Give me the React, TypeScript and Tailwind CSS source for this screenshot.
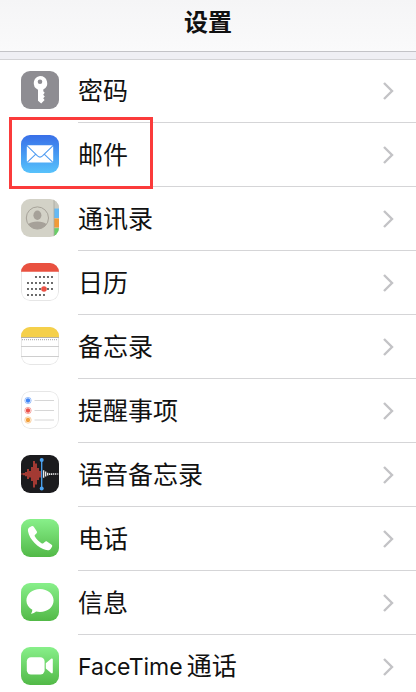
import React from 'react';

interface SettingsItem {
  id: string;
  label: React.ReactNode;
  icon: React.ReactNode;
  highlighted?: boolean;
}

interface IconTileProps {
  className: string;
  children: React.ReactNode;
}

const IconTile: React.FC<IconTileProps> = ({ className, children }) => (
  <span className={`block size-[38px] shrink-0 overflow-hidden rounded-[9px] ${className}`}>
    <svg className="block size-full" viewBox="0 0 38 38" fill="none" aria-hidden="true">
      {children}
    </svg>
  </span>
);

// Thin outline for the white icons
const TileOutline = () => (
  <rect x=".5" y=".5" width="37" height="37" rx="8.5" stroke="#e6e6e6" />
);

const KeyIcon = () => (
  <IconTile className="bg-[#8e8d92]">
    <path
      fill="#fff"
      fillRule="evenodd"
      d="M19 5a7.2 7.2 0 0 1 3.3 13.6v1.6l1.4 1.5-1.5 2 1.6 1.8-1.6 1.8 1.4 1.6-3.4 3.7-3.2-2.8V18.7A7.2 7.2 0 0 1 19 5Zm0 3.4a2.3 2.3 0 1 0 0 4.6 2.3 2.3 0 0 0 0-4.6Z"
    />
  </IconTile>
);

const MailIcon = () => (
  <IconTile className="bg-gradient-to-b from-[#3a6fe8] to-[#58c2fb]">
    <rect x="5.8" y="10.2" width="26.4" height="17.4" rx="1.6" fill="#fff" />
    <path
      stroke="#4f9cf1"
      strokeWidth="1.1"
      d="m6.2 10.8 10.3 10.1q2.5 2.3 5 0l10.3-10.1M6.4 27.2l8.4-8M31.6 27.2l-8.4-8"
    />
  </IconTile>
);

const ContactsIcon = () => (
  <IconTile className="bg-[#d3d2c7]">
    <rect x="33" width="5" height="9.5" fill="#c9c9c0" />
    <rect x="33" y="9.5" width="5" height="9.5" fill="#66b9f3" />
    <rect x="33" y="19.5" width="5" height="9" fill="#f19a38" />
    <rect x="33" y="29.2" width="5" height="8.8" fill="#69ce68" />
    <path stroke="#a9a89f" strokeWidth=".8" d="M33 0v38" />
    <circle cx="16.4" cy="19" r="11.1" stroke="#a6a299" strokeWidth="1" />
    <ellipse cx="16.4" cy="16.2" rx="4" ry="4.7" fill="#a6a199" />
    <path fill="#a6a199" d="M7.3 25.2c1.9-1.8 5.2-2.8 9.1-2.8s7.2 1 9.1 2.8a11.1 11.1 0 0 1-18.2 0Z" />
  </IconTile>
);

// first and last column of each calendar line
const calendarLines = [
  { y: 14, from: 2, to: 6 },
  { y: 20, from: 0, to: 6 },
  { y: 26, from: 0, to: 6 },
  { y: 32, from: 0, to: 4 },
];
const calendarColumns = [7, 11, 15, 19, 23, 27, 31];

const CalendarIcon = () => (
  <IconTile className="bg-white">
    <TileOutline />
    <path fill="#e95140" d="M0 0h38v8.7H0z" />
    {calendarLines.map(({ y, from, to }) =>
      calendarColumns.slice(from, to + 1).map((x) => (
        <circle key={`${x}-${y}`} cx={x} cy={y} r=".9" fill="#262626" />
      ))
    )}
    <circle cx="23" cy="26" r="2.8" fill="#ec5245" />
  </IconTile>
);

const NotesIcon = () => (
  <IconTile className="bg-white">
    <TileOutline />
    <path fill="#f5d04a" d="M0 0h38v10H0z" />
    <path stroke="#b9b3a2" strokeWidth="1" d="M0 10.500h38" />
    <path stroke="#b5b5b5" strokeWidth="1.2" strokeDasharray="1 1" d="M1 12.600h36" />
    <path stroke="#cecece" strokeWidth="1" d="M0 19.500h38M0 29.500h38" />
  </IconTile>
);

const reminderRows = [
  { y: 9.5, color: '#3f84f6' },
  { y: 19.5, color: '#eb5149' },
  { y: 29, color: '#f3a03d' },
];

const RemindersIcon = () => (
  <IconTile className="bg-white">
    <TileOutline />
    {reminderRows.map(({ y, color }) => (
      <g key={y}>
        <circle cx="7" cy={y} r="2.2" fill={color} />
        <circle cx="7" cy={y} r="3.2" stroke={color} strokeOpacity=".6" strokeWidth=".8" />
        <path stroke="#d6d6d6" strokeWidth="1" d={`M13.5 ${y}H33`} />
      </g>
    ))}
  </IconTile>
);

const VoiceMemosIcon = () => (
  <IconTile className="bg-[#1b1b1e]">
    <path
      stroke="#d1463b"
      strokeWidth="1.5"
      d="M1 18.6v.9M3 18v2.2M5 17v4.2M7 14v10M9 16v6.4M11 12v14M13 6v26.5M15 8.5v21M17 13v12M19 16v6.5"
    />
    <path
      stroke="#fff"
      strokeWidth="1.2"
      d="M22.700 15.300v7.500M24.700 16.500v5M26.700 17.700v2.800M28.700 18.200v1.700M30.700 18.200v1.700M32.700 18.300v1.500M34.700 18.300v1.500M36.700 18.500v1"
    />
    <path stroke="#4ca5f5" strokeWidth="1.3" d="M20.700 5v29" />
    <circle cx="20.700" cy="5" r="2" fill="#4ca5f5" />
    <circle cx="20.700" cy="33.500" r="2" fill="#4ca5f5" />
  </IconTile>
);

const PhoneIcon = () => (
  <IconTile className="bg-gradient-to-b from-[#88f08a] to-[#52b947]">
    <path
      fill="#fff"
      d="M8.200 8.500 10.500 7.200c.9-.5 1.800-.2 2.400.7l2.700 4.100c.6.900.5 1.800-.2 2.500l-1.300 1.300c-.6.6-.6 1.100-.2 1.800 1.700 2.800 3.800 5 6.600 6.700.7.4 1.300.4 1.800-.1l1.500-1.300c.8-.7 1.600-.7 2.500-.1l4 2.600c1 .6 1.200 1.500.7 2.400l-1.400 2.100c-.8 1.100-2.300 1.500-4.500 1.100C17.300 29.300 8.300 20.500 7 12.300c-.2-1.700.1-3 1.200-3.800Z"
    />
  </IconTile>
);

const MessagesIcon = () => (
  <IconTile className="bg-gradient-to-b from-[#88f08a] to-[#52b947]">
    <path
      fill="#fff"
      d="M19 6c7.600 0 13.600 5.100 13.600 11.500S26.600 29 19 29c-1.400 0-2.700-.2-3.900-.5-1.300 1.100-3 1.900-5.300 2.200.9-1 1.500-2.400 1.500-4C7.600 24.600 5.400 21.300 5.400 17.500 5.400 11.100 11.400 6 19 6Z"
    />
  </IconTile>
);

const FaceTimeIcon = () => (
  <IconTile className="bg-gradient-to-b from-[#88f08a] to-[#52b947]">
    <rect x="5.800" y="10.300" width="17.800" height="17.200" rx="4.200" fill="#fff" />
    <path fill="#fff" d="m24.800 16.300 5.300-4.500c.9-.7 1.700-.4 1.700.7v12.800c0 1.100-.8 1.400-1.700.7l-5.300-4.500Z" />
  </IconTile>
);

const items: SettingsItem[] = [
  { id: 'passwords', label: '密码', icon: <KeyIcon /> },
  { id: 'mail', label: '邮件', icon: <MailIcon />, highlighted: true },
  { id: 'contacts', label: '通讯录', icon: <ContactsIcon /> },
  { id: 'calendar', label: '日历', icon: <CalendarIcon /> },
  { id: 'notes', label: '备忘录', icon: <NotesIcon /> },
  { id: 'reminders', label: '提醒事项', icon: <RemindersIcon /> },
  { id: 'voice-memos', label: '语音备忘录', icon: <VoiceMemosIcon /> },
  { id: 'phone', label: '电话', icon: <PhoneIcon /> },
  { id: 'messages', label: '信息', icon: <MessagesIcon /> },
  {
    id: 'facetime',
    label: (
      <>
        <span className="mr-1 text-[23px]">FaceTime</span>通话
      </>
    ),
    icon: <FaceTimeIcon />,
  },
];

const SettingsRow: React.FC<{ item: SettingsItem }> = ({ item }) => (
  <li className="group relative">
    <a href={`#${item.id}`} className="flex h-16 pl-[21px]">
      <span className="mr-[19px] pt-[13px]">{item.icon}</span>
      <span className="flex flex-1 items-center justify-between border-t border-[#d5d5d7] pr-[22px] group-first:border-transparent">
        <span className="text-[25px] leading-8 whitespace-nowrap">{item.label}</span>
        <svg className="h-[18px] w-[12px]" viewBox="0 0 12 18" fill="none" aria-hidden="true">
          <path stroke="#c3c3c6" strokeWidth="2.4" d="m2 1 8 8-8 8" />
        </svg>
      </span>
    </a>

    {/* Highlight frame */}
    {item.highlighted && (
      <div className="pointer-events-none absolute -top-[5px] left-[9px] z-10 h-[72px] w-36 border-3 border-[#fb3b3b]" />
    )}
  </li>
);

export default function App() {
  return (
    <div className="flex h-screen flex-col bg-white font-['Inter','Noto_Sans_CJK_SC',sans-serif] text-[#111]">
      <header className="flex h-[52px] shrink-0 justify-center border-b border-[#c3c3c7] bg-gradient-to-b from-[#f5f5f6] to-[#fafafb] pt-[5px]">
        <h1 className="text-[24px] leading-9 font-bold">设置</h1>
      </header>

      <main className="min-h-0 flex-1 overflow-y-auto [scrollbar-width:none]">
        <div className="h-2 border-b border-[#d3d3d6] bg-[#efeff4]" />
        <ul className="-mt-0.5">
          {items.map((item) => (
            <SettingsRow key={item.id} item={item} />
          ))}
        </ul>
      </main>
    </div>
  );
}
